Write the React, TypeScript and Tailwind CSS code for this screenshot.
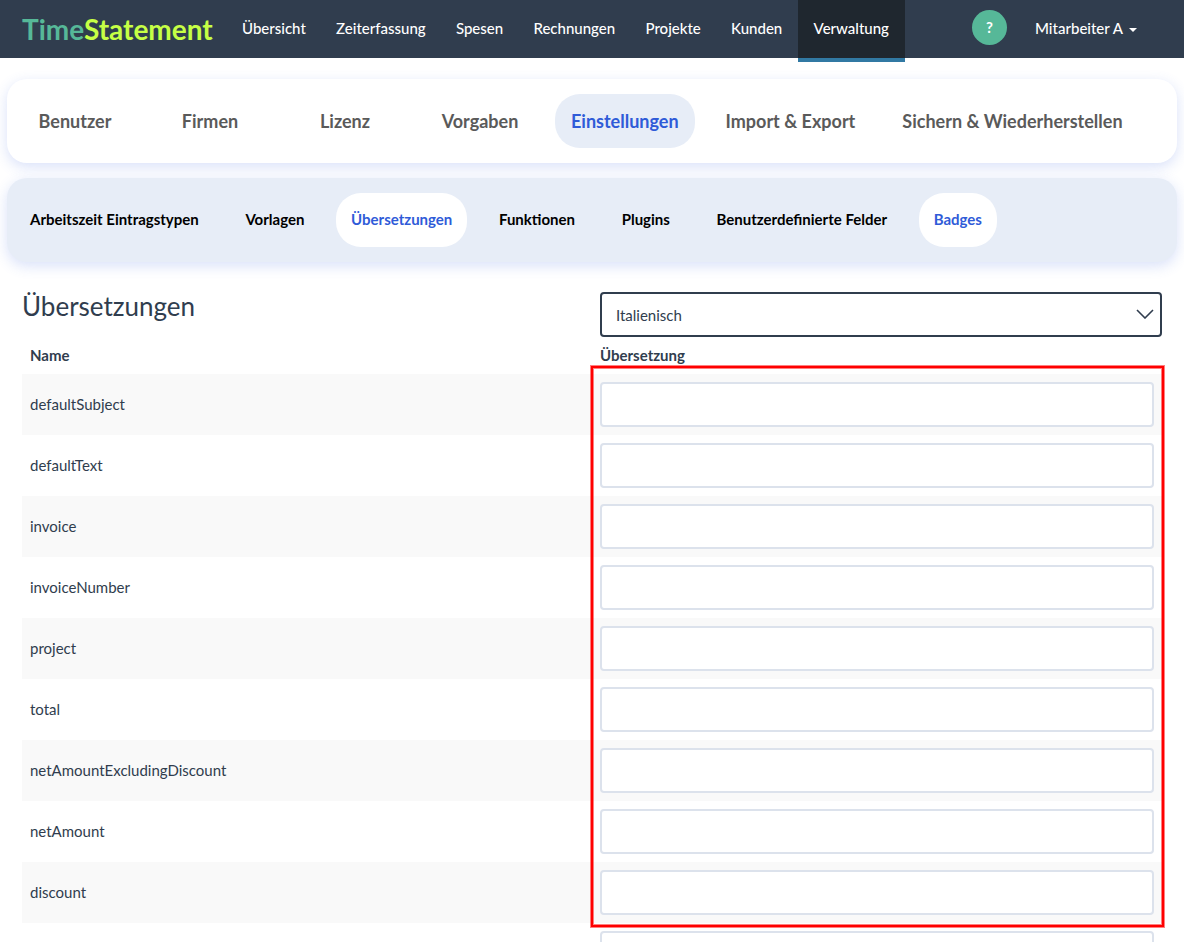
import { useState } from "react";

const mainNav = [
  "Übersicht",
  "Zeiterfassung",
  "Spesen",
  "Rechnungen",
  "Projekte",
  "Kunden",
  "Verwaltung",
];

const adminNav = [
  "Benutzer",
  "Firmen",
  "Lizenz",
  "Vorgaben",
  "Einstellungen",
  "Import & Export",
  "Sichern & Wiederherstellen",
];

const settingsNav = [
  { label: "Arbeitszeit Eintragstypen" },
  { label: "Vorlagen" },
  { label: "Übersetzungen", active: true },
  { label: "Funktionen" },
  { label: "Plugins" },
  { label: "Benutzerdefinierte Felder" },
  { label: "Badges", active: true },
];

const translationKeys = [
  "defaultSubject",
  "defaultText",
  "invoice",
  "invoiceNumber",
  "project",
  "total",
  "netAmountExcludingDiscount",
  "netAmount",
  "discount",
];

function TopBar() {
  return (
    <header className="flex h-[58px] items-start bg-[#303d4e] font-medium text-white">
      <a
        href="#"
        className="w-[227px] shrink-0 pl-[22px] text-[28px] leading-[58px] font-bold text-[#c6ff45]"
      >
        <span className="text-[#56b898]">Time</span>Statement
      </a>
      <nav className="flex w-full max-w-[678px] justify-between">
        {mainNav.map((label) => (
          <a
            key={label}
            href="#"
            className={
              label === "Verwaltung"
                ? "h-[62px] border-b-4 border-[#3179a3] bg-[#1f272f] px-4 leading-[56px]"
                : "px-[15px] leading-[56px]"
            }
          >
            {label}
          </a>
        ))}
      </nav>
      <div className="ml-auto flex shrink-0 items-start pr-[47px]">
        <button
          type="button"
          aria-label="Hilfe"
          className="mt-[10px] mr-7 size-[35px] rounded-full bg-[#56b898] font-bold"
        >
          ?
        </button>
        <button type="button" className="flex h-[56px] items-center gap-[6px]">
          Mitarbeiter A
          <svg width="8" height="4" viewBox="0 0 8 4" className="mt-1">
            <path d="M0 0h8L4 4z" fill="currentColor" />
          </svg>
        </button>
      </div>
    </header>
  );
}

function AdminTabs() {
  return (
    <nav className="flex gap-[15px] rounded-[20px] bg-white px-2 py-[15px] text-lg font-bold text-[#5a5a5a] shadow-[0_4px_14px_rgba(65,105,225,0.2)]">
      {adminNav.map((label) => (
        <a
          key={label}
          href="#"
          className={
            label === "Einstellungen"
              ? "min-w-[120px] rounded-[25px] bg-[#e7edf7] px-4 text-center leading-[54px] text-[#2f5bd8]"
              : "min-w-[120px] rounded-[25px] px-4 text-center leading-[54px]"
          }
        >
          {label}
        </a>
      ))}
    </nav>
  );
}

function SettingsTabs() {
  return (
    <nav className="rounded-[20px] bg-[#e7edf7] px-2 py-[15px] font-bold text-black shadow-[0_4px_14px_rgba(65,105,225,0.2)]">
      <div className="flex max-w-[982px] justify-between">
        {settingsNav.map(({ label, active }) => (
          <a
            key={label}
            href="#"
            className={
              active
                ? "h-[54px] rounded-[25px] bg-white px-[15px] leading-[52px] text-[#2f5bd8]"
                : "h-[54px] rounded-[25px] px-[15px] leading-[52px]"
            }
          >
            {label}
          </a>
        ))}
      </div>
    </nav>
  );
}

function LanguageSelect() {
  const [language, setLanguage] = useState("Italienisch");

  return (
    <div className="relative">
      <select
        aria-label="Sprache"
        value={language}
        onChange={(e) => setLanguage(e.target.value)}
        className="h-[45px] w-full appearance-none rounded border-2 border-[#303d4e] bg-white px-[14px] pt-[2px]"
      >
        <option>Deutsch</option>
        <option>Englisch</option>
        <option>Französisch</option>
        <option>Italienisch</option>
      </select>
      <svg
        width="18"
        height="10"
        viewBox="0 0 18 10"
        className="pointer-events-none absolute top-[17px] right-2"
      >
        <path d="M1 1l8 8 8-8" fill="none" stroke="#303d4e" strokeWidth="1.6" />
      </svg>
    </div>
  );
}

const inputClass =
  "block h-[45px] w-full rounded border-2 border-[#dce2ec] bg-white px-[14px]";

function TranslationTable() {
  return (
    <div className="relative">
      <table className="w-full table-fixed text-left">
        <thead>
          <tr>
            <th className="p-2 leading-[21px]">Name</th>
            <th className="p-2 leading-[21px]">Übersetzung</th>
          </tr>
        </thead>
        <tbody>
          {translationKeys.map((key) => (
            <tr key={key} className="odd:bg-[#f9f9f9]">
              <td className="p-2">
                <label htmlFor={key}>{key}</label>
              </td>
              <td className="p-2">
                <input id={key} type="text" className={inputClass} />
              </td>
            </tr>
          ))}
          {/* empty row for a further entry */}
          <tr>
            <td className="p-2" />
            <td className="p-2">
              <input type="text" aria-label="Übersetzung" className={inputClass} />
            </td>
          </tr>
        </tbody>
      </table>
      {/* highlight frame around the first nine inputs */}
      <div className="pointer-events-none absolute top-[29px] -right-[2px] left-[calc(50%-1px)] h-[561px] border-2 border-[#ff0000] shadow-[0_0_0_1px_#ff000080,inset_0_0_0_1px_#ff000080]" />
    </div>
  );
}

export default function App() {
  return (
    <div className="h-screen overflow-hidden bg-white font-['Lato',sans-serif] text-[15px] text-[#303d4e]">
      <TopBar />
      <div className="flex flex-col gap-[15px] px-[7px] pt-[21px]">
        <AdminTabs />
        <SettingsTabs />
      </div>
      <main className="px-[22px] pt-[30px]">
        <div className="grid grid-cols-2 gap-4">
          <h1 className="text-[26px] leading-[28px]">Übersetzungen</h1>
          <LanguageSelect />
        </div>
        <TranslationTable />
      </main>
    </div>
  );
}
